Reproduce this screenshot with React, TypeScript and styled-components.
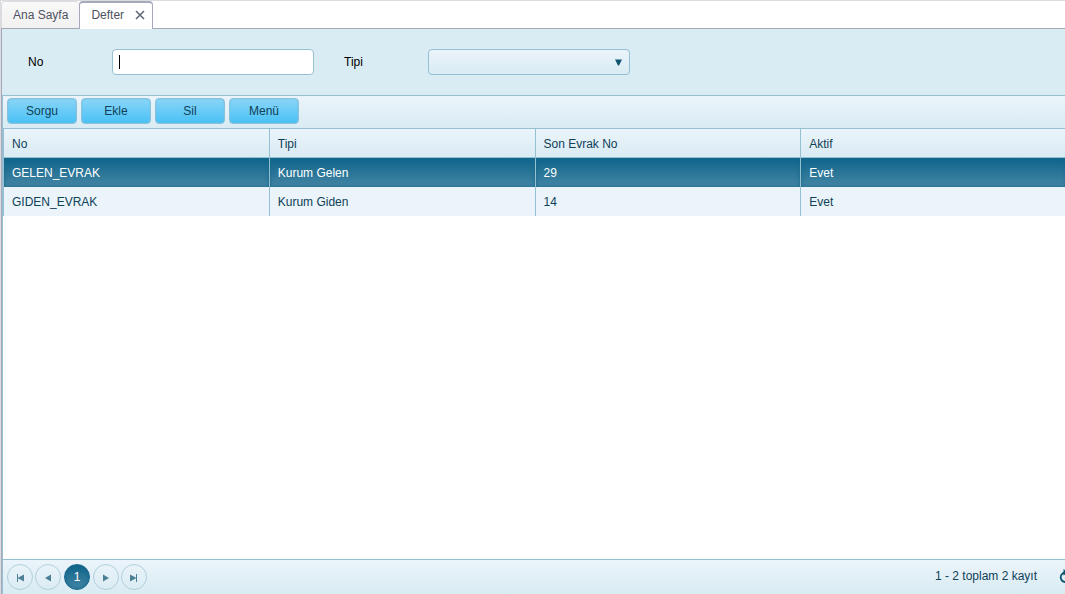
import React, { useState } from "react";
import styled, { createGlobalStyle, css } from "styled-components";

const line = "#94c0d2";
const ink = "#0f4157";
const softGradient = "linear-gradient(#ebf4fa, #d9ebf3)";

const GlobalStyle = createGlobalStyle`
  *, *::before, *::after { box-sizing: border-box; }
  html { background: #fff; }
  body {
    margin: 0;
    overflow: hidden;
    font: 12px/16px "Liberation Sans", Arial, sans-serif;
    color: ${ink};
  }
  button, input, select { font: inherit; color: inherit; }
`;

const Page = styled.div`
  display: flex;
  flex-direction: column;
  min-height: 100vh;
  overflow: hidden;
  border-top: 1px solid #dcdce0;
  border-left: 1px solid #dcdce0;
`;

const TabBar = styled.div`
  display: flex;
  height: 28px;
  border-bottom: 1px solid #a6a9bc;
`;

const Tab = styled.div<{ $active?: boolean }>`
  display: flex;
  align-items: center;
  gap: 11px;
  color: #4f5361;
  border-radius: 4px 4px 0 0;
  ${(p) =>
    p.$active
      ? css`
          height: 28px;
          padding: 0 7px 2px 11px;
          background: #fff;
          border: 1px solid #a6a9bc;
          border-top-width: 2px;
          border-bottom: 0;
        `
      : css`
          height: 27px;
          padding: 0 11px;
          background: linear-gradient(#f9f9f9, #f1f1f1);
          border: 1px solid #dcdce0;
          border-width: 1px 0 0 1px;
        `}
`;

const PlainButton = styled.button`
  display: flex;
  align-items: center;
  padding: 0;
  border: 0;
  background: none;
  cursor: pointer;
`;

const TabLabel = styled(PlainButton)`
  line-height: 16px;
`;

const Content = styled.main`
  display: flex;
  flex: 1;
  flex-direction: column;
  border-left: 1px solid #a6a9bc;
`;

const Form = styled.form`
  display: flex;
  gap: 30px;
  padding: 20px 26px;
  background: #d9ebf3;
`;

const Field = styled.div`
  display: flex;
  align-items: center;
`;

const FieldLabel = styled.label`
  width: 84px;
  color: #000;
`;

const control = css`
  width: 202px;
  height: 26px;
  border: 1px solid ${line};
  border-radius: 4px;
  outline: none;
`;

const TextBox = styled.input`
  ${control}
  padding: 4px 6px;
  color: #000;
  caret-color: transparent;
  background: linear-gradient(#000, #000) 6px 5px / 1px 14px no-repeat, #fff;
`;

const SelectWrap = styled.div`
  position: relative;
`;

const Select = styled.select`
  ${control}
  display: block;
  padding: 0 24px 0 6px;
  appearance: none;
  background: ${softGradient};
`;

const SelectArrow = styled.svg`
  position: absolute;
  top: 10px;
  right: 8px;
  pointer-events: none;
`;

const Grid = styled.section`
  display: flex;
  flex: 1;
  flex-direction: column;
  border-top: 1px solid ${line};
  border-left: 1px solid ${line};
`;

const Toolbar = styled.div`
  display: flex;
  gap: 4px;
  height: 32px;
  padding: 2px 4px;
  background: ${softGradient};
`;

const ToolButton = styled.button`
  width: 70px;
  height: 26px;
  padding: 0;
  border: 1px solid #88c1da;
  border-radius: 4px;
  color: ${ink};
  background: linear-gradient(#8ad5f7, #48c1f6);
  box-shadow: inset 0 0 2px #77bfdf;
  cursor: pointer;
`;

const TableArea = styled.div`
  flex: 1;
  margin-right: -2px;
  background: #fff;
`;

const Table = styled.table`
  width: 100%;
  table-layout: fixed;
  border-spacing: 0;
  border-top: 1px solid ${line};
  border-left: 1px solid ${line};
`;

const HeadCell = styled.th`
  height: 29px;
  padding: 1px 8px 0;
  font-weight: 400;
  text-align: left;
  border-right: 1px solid ${line};
  border-bottom: 1px solid ${line};
  background: ${softGradient};
`;

const Cell = styled.td`
  height: 29px;
  padding: 0 8px;
  border-right: 1px solid ${line};
`;

const Row = styled.tr<{ $selected: boolean }>`
  cursor: default;
  background: #eaf4fa;
  ${(p) =>
    p.$selected &&
    css`
      color: #fff;
      ${Cell} {
        background: linear-gradient(#0e648a, #4586a5);
        box-shadow: inset 0 0 4px #17688c;
      }
    `}
`;

const Pager = styled.footer`
  display: flex;
  align-items: center;
  justify-content: space-between;
  height: 35px;
  margin-right: -8px;
  padding-left: 4px;
  border-top: 1px solid ${line};
  background: ${softGradient};
`;

const PageButtons = styled.nav`
  display: flex;
  gap: 2px;
`;

const PageButton = styled.button<{ $current?: boolean }>`
  display: flex;
  align-items: center;
  justify-content: center;
  width: 26px;
  height: 26px;
  padding: 0;
  border: 1px solid #b0d0dc;
  border-radius: 50%;
  color: #4b7f95;
  background: transparent;
  cursor: pointer;
  ${(p) =>
    p.$current &&
    css`
      margin: 0 1px;
      color: #fff;
      border-color: #14678b;
      background: linear-gradient(#0e648a, #4586a5);
      box-shadow: inset 0 0 4px #17688c;
    `}
`;

const Summary = styled.div`
  display: flex;
  align-items: center;
  gap: 22px;
  padding-bottom: 2px;
`;

const columns = ["No", "Tipi", "Son Evrak No", "Aktif"];
const records = [
  ["GELEN_EVRAK", "Kurum Gelen", "29", "Evet"],
  ["GIDEN_EVRAK", "Kurum Giden", "14", "Evet"],
];
const actions = ["Sorgu", "Ekle", "Sil", "Menü"];

const Glyph = ({ back, edge }: { back?: boolean; edge?: boolean }) => (
  <svg width="10" height="10" viewBox="0 0 10 10" fill="currentColor" aria-hidden="true">
    <g transform={back ? "translate(10 0) scale(-1 1)" : undefined}>
      {edge ? <path d="M1 2.5 7.5 6 1 9.5ZM7 2h1v8H7Z" /> : <path d="M2 2.5 8 6 2 9.5Z" />}
    </g>
  </svg>
);

export default function App() {
  const [selected, setSelected] = useState(0);
  return (
    <Page>
      <GlobalStyle />
      <TabBar>
        <Tab>
          <TabLabel type="button">Ana Sayfa</TabLabel>
        </Tab>
        <Tab $active>
          <TabLabel type="button">Defter</TabLabel>
          <PlainButton type="button" aria-label="Kapat">
            <svg width="10" height="10" viewBox="0 0 10 10" stroke="#5d6473" strokeWidth="1.5" aria-hidden="true">
              <path d="M1 1 9 9M9 1 1 9" />
            </svg>
          </PlainButton>
        </Tab>
      </TabBar>
      <Content>
        <Form onSubmit={(e) => e.preventDefault()}>
          <Field>
            <FieldLabel htmlFor="no">No</FieldLabel>
            <TextBox id="no" type="text" autoComplete="off" />
          </Field>
          <Field>
            <FieldLabel htmlFor="tipi">Tipi</FieldLabel>
            <SelectWrap>
              <Select id="tipi" defaultValue="">
                <option value="" />
              </Select>
              <SelectArrow width="7" height="7" viewBox="0 0 7 7" fill="#0e5570" aria-hidden="true">
                <path d="M0 0.5H7L4 6.5H3Z" />
              </SelectArrow>
            </SelectWrap>
          </Field>
        </Form>
        <Grid>
          <Toolbar>
            {actions.map((a) => (
              <ToolButton key={a} type="button">
                {a}
              </ToolButton>
            ))}
          </Toolbar>
          <TableArea>
            <Table>
              <thead>
                <tr>
                  {columns.map((c) => (
                    <HeadCell key={c} scope="col">
                      {c}
                    </HeadCell>
                  ))}
                </tr>
              </thead>
              <tbody>
                {records.map((r, i) => (
                  <Row key={r[0]} $selected={i === selected} onClick={() => setSelected(i)}>
                    {r.map((v, j) => (
                      <Cell key={columns[j]}>{v}</Cell>
                    ))}
                  </Row>
                ))}
              </tbody>
            </Table>
          </TableArea>
          <Pager>
            <PageButtons aria-label="Sayfalar">
              <PageButton type="button" aria-label="İlk">
                <Glyph back edge />
              </PageButton>
              <PageButton type="button" aria-label="Önceki">
                <Glyph back />
              </PageButton>
              <PageButton type="button" $current>
                1
              </PageButton>
              <PageButton type="button" aria-label="Sonraki">
                <Glyph />
              </PageButton>
              <PageButton type="button" aria-label="Son">
                <Glyph edge />
              </PageButton>
            </PageButtons>
            <Summary>
              <span>1 - 2 toplam 2 kayıt</span>
              <PlainButton type="button" aria-label="Yenile">
                <svg width="14" height="14" viewBox="0 0 14 14" fill="none" stroke="#0e5570" strokeWidth="1.8" aria-hidden="true">
                  <path d="M6 3.5A4.8 4.8 0 1 0 11 6.5" />
                  <path d="M4.5 0 9 3.5 4.5 6.5Z" fill="#0e5570" stroke="none" />
                </svg>
              </PlainButton>
            </Summary>
          </Pager>
        </Grid>
      </Content>
    </Page>
  );
}
